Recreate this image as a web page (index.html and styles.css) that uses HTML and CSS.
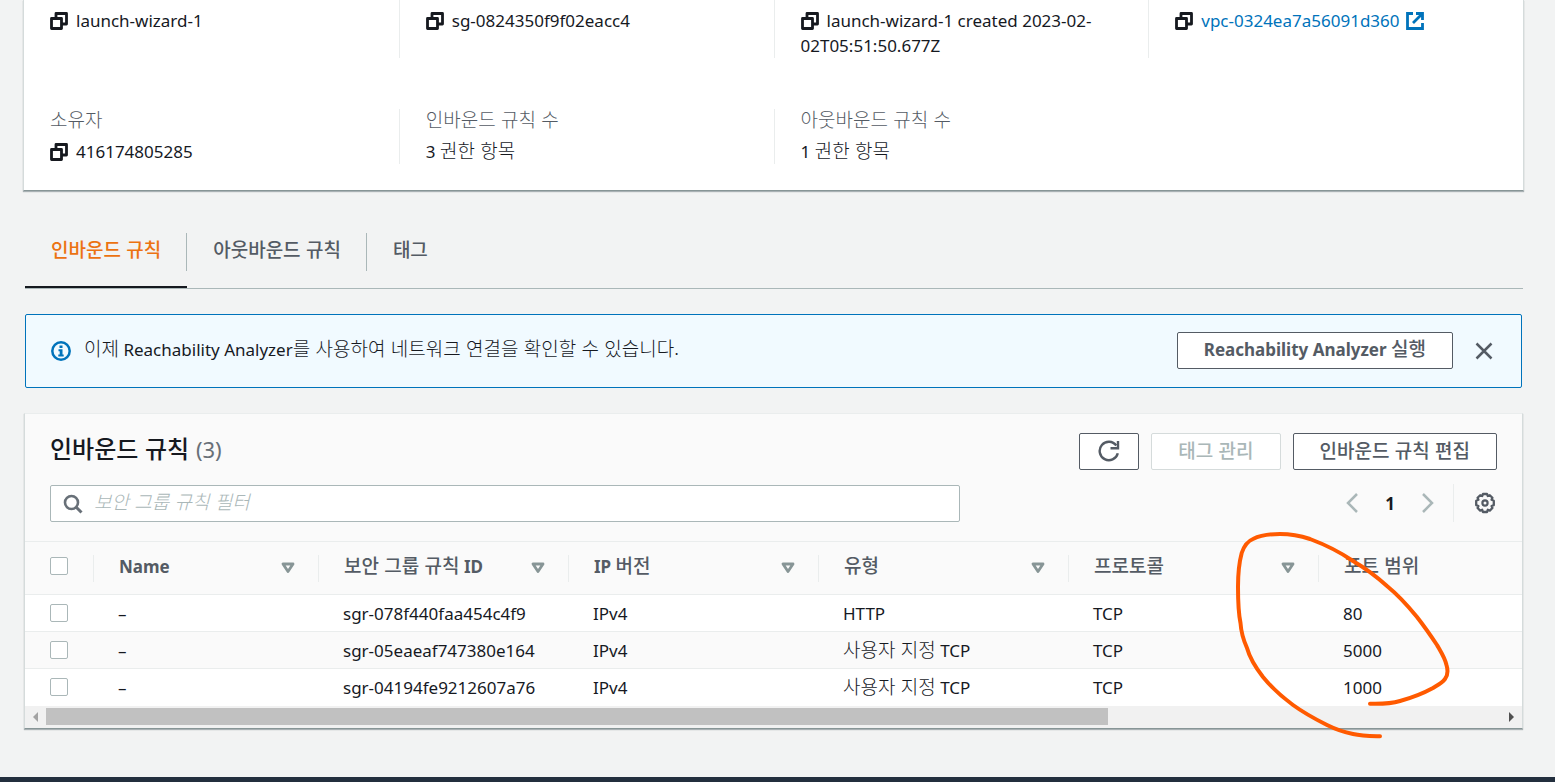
FILE: index.html
```
<!DOCTYPE html>
<html lang="ko">
<head>
    <meta charset="UTF-8">
    <meta name="viewport" content="width=device-width, initial-scale=1.0">
    <title>launch-wizard-1</title>
    <link rel="stylesheet" href="styles.css">
</head>
<body>
    <!-- shared icons -->
    <svg class="sprite" aria-hidden="true">
        <symbol id="copy" viewBox="0 0 18 18">
            <path d="M1.5 6.5h10v10h-10z M6 6V1.500h10.500v10.500H12" fill="none" stroke="currentColor" stroke-width="2.800" stroke-linejoin="round"/>
        </symbol>
        <symbol id="sort" viewBox="0 0 14 12">
            <path d="M2 2h10L7 9.500z" fill="none" stroke="currentColor" stroke-width="2.800" stroke-linejoin="round"/>
        </symbol>
    </svg>

    <main>
        <section class="details">
            <div class="cell first-row">
                <p class="value"><svg class="copy"><use href="#copy"/></svg>launch-wizard-1</p>
            </div>
            <div class="cell first-row">
                <p class="value"><svg class="copy"><use href="#copy"/></svg>sg-0824350f9f02eacc4</p>
            </div>
            <div class="cell first-row">
                <p class="value"><svg class="copy"><use href="#copy"/></svg>launch-wizard-1 created 2023-02-<br>02T05:51:50.677Z</p>
            </div>
            <div class="cell first-row">
                <p class="value"><svg class="copy"><use href="#copy"/></svg><a href="#">vpc-0324ea7a56091d360<svg class="external" viewBox="0 0 18 18"><path d="M7 1.500H1.500v15h15V11M10 1.500h6.500V8M16 2L7 11" fill="none" stroke="currentColor" stroke-width="2.800"/></svg></a></p>
            </div>
            <div class="cell">
                <h4 class="ko">소유자</h4>
                <p class="value"><svg class="copy"><use href="#copy"/></svg>416174805285</p>
            </div>
            <div class="cell">
                <h4 class="ko">인바운드 규칙 수</h4>
                <p class="value">3 <span class="ko">권한 항목</span></p>
            </div>
            <div class="cell">
                <h4 class="ko">아웃바운드 규칙 수</h4>
                <p class="value">1 <span class="ko">권한 항목</span></p>
            </div>
        </section>

        <nav class="tabs">
            <a class="ko active" href="#inbound"><span>인바운드 규칙</span></a>
            <a class="ko" href="#outbound"><span>아웃바운드 규칙</span></a>
            <a class="ko" href="#tags"><span>태그</span></a>
        </nav>

        <div class="alert">
            <svg class="info" viewBox="0 0 20 20"><circle cx="10" cy="10" r="8.700" fill="none" stroke="currentColor" stroke-width="2.500"/><path d="M8.500 4.500h3v2.500h-3zM7.500 8.200h4v5.300h1.200v2H7.300v-2h1.400v-3.300H7.500z" fill="currentColor"/></svg>
            <p><span class="ko">이제</span> Reachability Analyzer<span class="ko">를 사용하여 네트워크 연결을 확인할 수 있습니다.</span></p>
            <button type="button" class="btn">Reachability Analyzer <span class="ko">실행</span></button>
            <button type="button" class="icon-btn" aria-label="닫기"><svg width="18" height="18" viewBox="0 0 18 18"><path d="M1.500 1.500l15 15M16.500 1.500l-15 15" fill="none" stroke="currentColor" stroke-width="2.500"/></svg></button>
        </div>

        <section class="panel" id="inbound">
            <div class="panel-head">
                <div class="row">
                    <h2>인바운드 규칙 <span>(3)</span></h2>
                    <div class="actions">
                        <button type="button" class="btn refresh" aria-label="새로 고침"><svg width="22" height="22" viewBox="0 0 22 22"><path d="M19.800 13.200A9.200 9.200 0 1 1 18.300 5.500" fill="none" stroke="currentColor" stroke-width="2.400"/><path d="M20 1v7.200h-7.500" fill="none" stroke="currentColor" stroke-width="2.400"/></svg></button>
                        <button type="button" class="btn ko" disabled>태그 관리</button>
                        <button type="button" class="btn ko">인바운드 규칙 편집</button>
                    </div>
                </div>
                <div class="row">
                    <div class="search">
                        <svg width="20" height="20" viewBox="0 0 20 20"><circle cx="8.500" cy="8.500" r="6.500" fill="none" stroke="currentColor" stroke-width="2.600"/><path d="M13 13l5.500 5.500" stroke="currentColor" stroke-width="3"/></svg>
                        <input type="text" class="ko" placeholder="보안 그룹 규칙 필터" aria-label="보안 그룹 규칙 필터">
                    </div>
                    <div class="pager">
                        <button type="button" class="icon-btn" aria-label="이전"><svg width="12" height="20" viewBox="0 0 12 20"><path d="M11 1L2 10l9 9" fill="none" stroke="currentColor" stroke-width="2.500"/></svg></button>
                        <b>1</b>
                        <button type="button" class="icon-btn" aria-label="다음"><svg width="12" height="20" viewBox="0 0 12 20"><path d="M1 1l9 9-9 9" fill="none" stroke="currentColor" stroke-width="2.500"/></svg></button>
                        <div class="settings">
                            <button type="button" class="icon-btn" aria-label="기본 설정"><svg width="22" height="22" viewBox="0 0 22 22"><path d="M9 2h4l.8 2 2-.8 2.600 2.600-.8 2 2.200.9v4.400l-2.200.9.8 2-2.600 2.600-2-.8L13 20H9l-.8-2.200-2 .8L3.600 16l.8-2-2.200-.9V8.700l2.200-.9-.8-2 2.600-2.600 2 .8z" fill="none" stroke="currentColor" stroke-width="2.300" stroke-linejoin="round"/><circle cx="11" cy="11" r="2.600" fill="none" stroke="currentColor" stroke-width="2.200"/></svg></button>
                        </div>
                    </div>
                </div>
            </div>

            <table>
                <colgroup>
                    <col class="col-check">
                    <col class="col-name">
                    <col class="col">
                    <col class="col">
                    <col class="col">
                    <col class="col">
                    <col>
                </colgroup>
                <thead>
                    <tr>
                        <th><input type="checkbox" aria-label="모두 선택"></th>
                        <th><div>Name<button type="button" aria-label="정렬"><svg><use href="#sort"/></svg></button></div></th>
                        <th><div><span><span class="ko">보안 그룹 규칙</span> ID</span><button type="button" aria-label="정렬"><svg><use href="#sort"/></svg></button></div></th>
                        <th><div><span>IP <span class="ko">버전</span></span><button type="button" aria-label="정렬"><svg><use href="#sort"/></svg></button></div></th>
                        <th><div><span class="ko">유형</span><button type="button" aria-label="정렬"><svg><use href="#sort"/></svg></button></div></th>
                        <th><div><span class="ko">프로토콜</span><button type="button" aria-label="정렬"><svg><use href="#sort"/></svg></button></div></th>
                        <th><div><span class="ko">포트 범위</span></div></th>
                    </tr>
                </thead>
                <tbody>
                    <tr>
                        <td><input type="checkbox" aria-label="sgr-078f440faa454c4f9"></td>
                        <td>–</td>
                        <td>sgr-078f440faa454c4f9</td>
                        <td>IPv4</td>
                        <td>HTTP</td>
                        <td>TCP</td>
                        <td>80</td>
                    </tr>
                    <tr>
                        <td><input type="checkbox" aria-label="sgr-05eaeaf747380e164"></td>
                        <td>–</td>
                        <td>sgr-05eaeaf747380e164</td>
                        <td>IPv4</td>
                        <td><span class="ko">사용자 지정</span> TCP</td>
                        <td>TCP</td>
                        <td>5000</td>
                    </tr>
                    <tr>
                        <td><input type="checkbox" aria-label="sgr-04194fe9212607a76"></td>
                        <td>–</td>
                        <td>sgr-04194fe9212607a76</td>
                        <td>IPv4</td>
                        <td><span class="ko">사용자 지정</span> TCP</td>
                        <td>TCP</td>
                        <td>1000</td>
                    </tr>
                </tbody>
            </table>

            <div class="scrollbar">
                <span class="arrow left"></span>
                <div class="track"><div class="thumb"></div></div>
                <span class="arrow right"></span>
            </div>

            <!-- hand-drawn circle round the port range -->
            <svg class="marker" viewBox="1225 524 240 220"><path d="M1380 736.300C1369 736 1362 736 1353 734C1343 732 1335 729 1327 725C1315 719 1304 713 1293 705C1282 697 1272 688 1263 677C1256 668 1250 659 1247 648C1243 639 1241 631 1240.500 623C1238 611 1238 599 1238 587C1238 575 1239 563 1241.700 553C1244 546 1248 541 1253 539C1261 535 1270 534 1280 534C1291 534 1301 536 1310 539C1326 545 1340 552 1353 561C1365 568 1377 577 1387 586C1398 595 1408 606 1417 617C1424 626 1431 636 1437 645C1441 652 1445 658 1446.500 665C1448 670 1448 675 1445 679C1442 683 1438 685 1433 688C1422 694 1411 698 1400 701C1390 704 1381 704 1370 703.700" fill="none" stroke="#ff5a00" stroke-width="4" stroke-linecap="round"/></svg>
        </section>
    </main>
    <footer></footer>
</body>
</html>
```
FILE: styles.css
```
:root {
    --text: #16191f;
    --muted: #545b64;
    --border: #aab7b8;
    --line: #eaeded;
    --blue: #0073bb;
}

* {
    box-sizing: border-box;
}

body {
    margin: 0;
    background: #f2f3f3;
    color: var(--text);
    font-family: "Noto Sans", "Noto Sans CJK KR", sans-serif;
    font-size: 17px;
    line-height: 25px;
    min-height: 100vh;
    display: flex;
    flex-direction: column;
}

h2, h4, p {
    margin: 0;
}

a {
    color: var(--blue);
    text-decoration: none;
}

button, input {
    font: inherit;
    color: inherit;
}

button {
    cursor: pointer;
}

.sprite {
    position: absolute;
    width: 0;
    height: 0;
}

/* Hangul runs a little larger than the latin text */
.ko {
    font-family: "Noto Sans CJK KR", sans-serif;
    font-size: 19px;
    line-height: 20px;
}

main {
    flex: 1;
    padding: 0 31px 47px 23px;
}

/* Details card */
.details {
    display: grid;
    grid-template-columns: repeat(4, 1fr);
    row-gap: 51px;
    padding-bottom: 26px;
    background: #fff;
    border: 1px solid #d5dbdb;
    border-top: none;
    border-bottom-color: #879596;
    box-shadow: 0 1px 1px rgba(0, 28, 36, 0.3);
}

.cell {
    padding: 0 26px;
    border-left: 1px solid var(--line);
}

.cell:nth-child(4n + 1) {
    border-left: none;
}

.cell.first-row {
    padding-top: 8px;
}

.cell h4 {
    font-weight: 300;
    color: var(--muted);
    margin-bottom: 10px;
}

.value {
    white-space: nowrap;
}

.value .ko, .alert p .ko, td .ko {
    font-weight: 300;
}

.copy, .external {
    width: 18px;
    height: 18px;
    vertical-align: -3px;
}

.copy {
    margin-right: 8px;
}

.external {
    margin-left: 6px;
}

/* Tabs */
.tabs {
    display: flex;
    margin: 24px 1px 25px 2px;
    border-bottom: 1px solid var(--border);
}

.tabs a {
    padding: 18px 0 15px;
    border-bottom: 2px solid transparent;
    color: var(--muted);
    font-weight: 700;
}

.tabs a span {
    display: block;
    padding: 6px 25px 12px 26px;
    border-right: 1px solid var(--border);
}

.tabs a:last-child span {
    border-right: none;
}

.tabs .active {
    color: #ec7211;
    border-bottom-color: var(--text);
}

/* Alert */
.alert {
    display: flex;
    align-items: center;
    margin: 0 2px 25px;
    padding: 17px 24px 18px 25px;
    background: #f1faff;
    border: 1px solid var(--blue);
    border-radius: 2px;
}

.alert p {
    flex: 1;
    margin-left: 13px;
    padding-bottom: 2px;
}

.info {
    width: 20px;
    height: 20px;
    color: var(--blue);
}

.btn {
    height: 37px;
    padding: 0 26px 3px;
    background: #fff;
    border: 1px solid var(--muted);
    border-radius: 2px;
    color: var(--muted);
    font-weight: 700;
}

.tabs .ko, .btn.ko, .btn .ko, th .ko {
    font-weight: 500;
}

.btn:disabled {
    color: var(--border);
    border-color: #d5dbdb;
}

.icon-btn {
    display: flex;
    padding: 4px;
    border: none;
    background: none;
    color: var(--muted);
}

.alert .icon-btn {
    margin-left: 18px;
}

/* Rules panel */
.panel {
    position: relative;
    margin: 0 1px;
    background: #fafafa;
    border: 1px solid #d5dbdb;
    border-top-color: var(--line);
    border-bottom-color: #879596;
    box-shadow: 0 1px 1px rgba(0, 28, 36, 0.3);
}

.panel-head {
    padding: 18px 25px 19px;
}

.row {
    display: flex;
    align-items: center;
    justify-content: space-between;
}

.row + .row {
    margin-top: 14px;
}

h2 {
    padding-bottom: 5px;
    font-family: "Noto Sans CJK KR", sans-serif;
    font-size: 24px;
    font-weight: 500;
    line-height: 32px;
}

h2 span {
    font-family: "Noto Sans", sans-serif;
    font-size: 22px;
    font-weight: 400;
    color: #687078;
}

.actions {
    display: flex;
    gap: 12px;
}

.refresh {
    display: flex;
    align-items: center;
    padding: 0 18px;
}

.search {
    position: relative;
    width: 910px;
}

.search svg {
    position: absolute;
    left: 13px;
    top: 9px;
    color: #687078;
}

.search input {
    display: block;
    width: 100%;
    height: 37px;
    padding: 0 12px 5px 43px;
    border: 1px solid var(--border);
    border-radius: 2px;
    background: #fff;
}

.search input::placeholder {
    color: var(--border);
    font-style: italic;
    font-weight: 300;
    opacity: 1;
}

.pager {
    display: flex;
    align-items: center;
}

.pager b {
    margin: 0 23px;
    font-size: 17px;
}

.pager .icon-btn {
    color: var(--border);
}

.pager .settings {
    margin-left: 15px;
    padding: 4px 0 4px 16px;
    border-left: 1px solid var(--line);
}

.pager .settings .icon-btn {
    margin-right: -3px;
    color: var(--muted);
}

table {
    width: 100%;
    table-layout: fixed;
    border-collapse: collapse;
    border-top: 1px solid var(--line);
}

.col-check {
    width: 68px;
}

.col-name {
    width: 225px;
}

.col {
    width: 250px;
}

th {
    height: 53px;
    padding: 0;
    text-align: left;
    line-height: 23px;
    color: var(--muted);
}

th:first-child, td:first-child {
    padding-left: 25px;
}

th:first-child {
    padding-bottom: 4px;
}

th div {
    display: flex;
    align-items: flex-start;
    justify-content: space-between;
    height: 27px;
    padding: 0 23px 0 25px;
    border-left: 1px solid var(--line);
}

th button {
    display: flex;
    align-self: center;
    padding: 0;
    border: none;
    background: none;
    color: #879596;
}

th svg {
    width: 14px;
    height: 12px;
}

td {
    height: 37px;
    padding: 0 0 0 25px;
    border-top: 1px solid var(--line);
    white-space: nowrap;
}

tbody tr:nth-child(odd) {
    background: #fff;
}

input[type="checkbox"] {
    appearance: none;
    display: block;
    width: 18px;
    height: 18px;
    margin: 0;
    border: 1px solid var(--border);
    border-radius: 2px;
    background: #fff;
}

.scrollbar {
    display: flex;
    align-items: center;
    height: 22px;
    background: #f1f1f1;
}

.track {
    flex: 1;
}

.thumb {
    width: 73%;
    height: 17px;
    background: #c1c1c1;
}

.arrow {
    width: 21px;
    display: flex;
    justify-content: center;
}

.arrow::before {
    content: "";
    border: 5px solid transparent;
}

.arrow.left::before {
    border-left-width: 0;
    border-right-color: #a3a3a3;
}

.arrow.right::before {
    border-right-width: 0;
    border-left-color: #505050;
}

.marker {
    position: absolute;
    left: 1200px;
    top: 110px;
    width: 240px;
    height: 220px;
    pointer-events: none;
}

footer {
    height: 5px;
    background: #232f3e;
}
```
